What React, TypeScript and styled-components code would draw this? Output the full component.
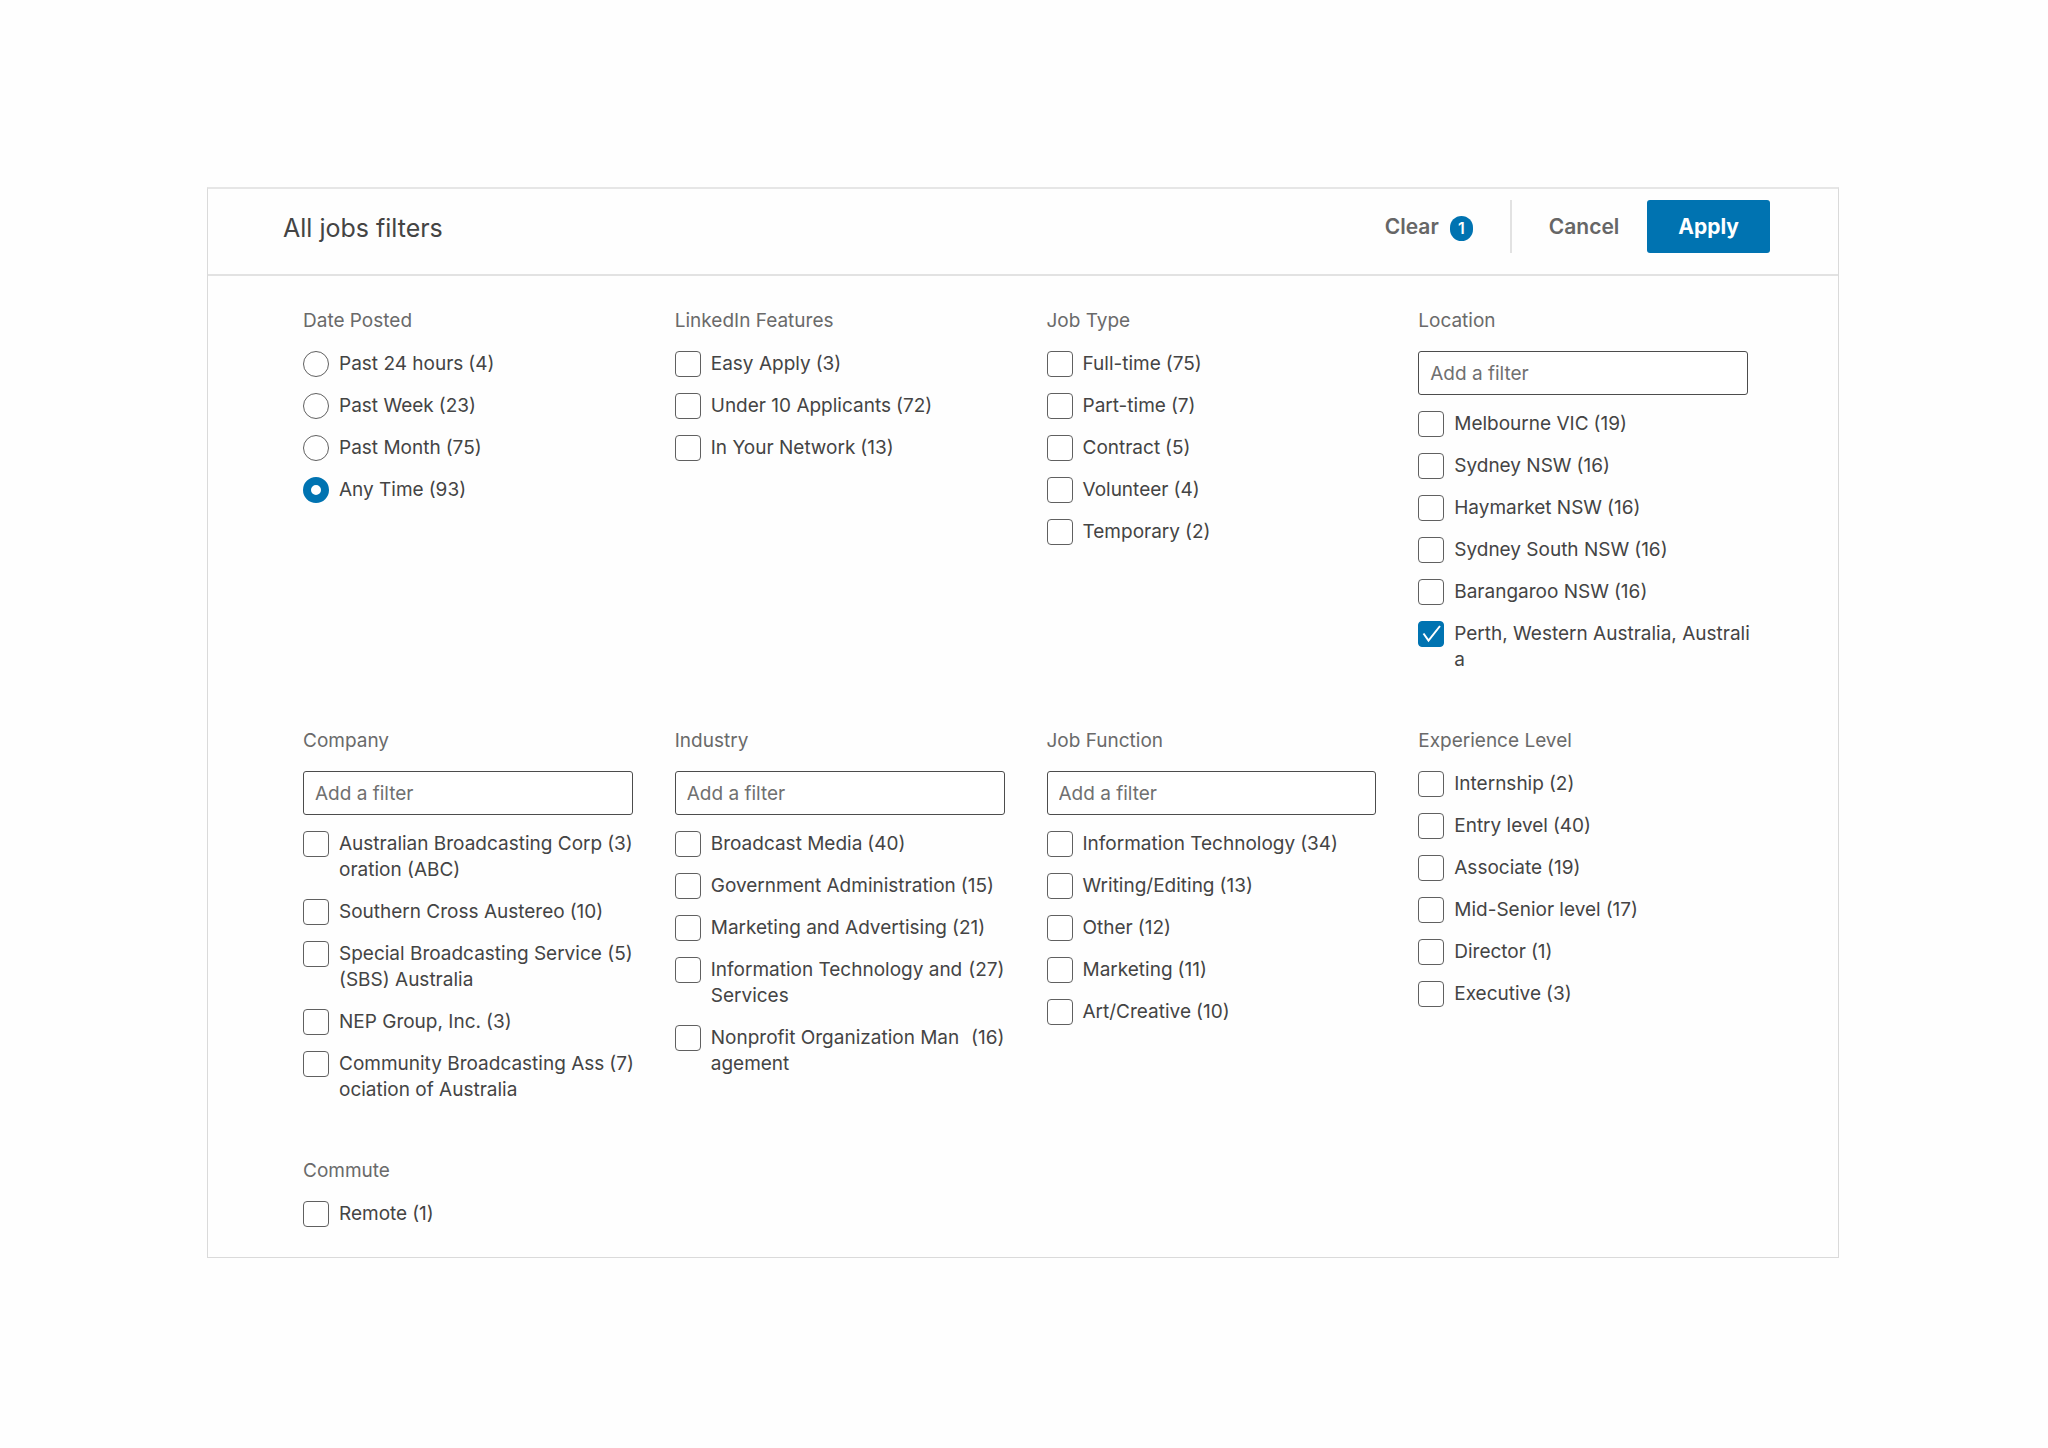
import React, { useState } from 'react';
import styled, { createGlobalStyle } from 'styled-components';

const GlobalStyle = createGlobalStyle`
  *, *::before, *::after { box-sizing: border-box; }
  body {
    margin: 0;
    background: #fefefe;
    color: #444444;
    font-family: Inter, "Liberation Sans", sans-serif;
    font-size: 19px;
    line-height: 26px;
  }
  button, input { font: inherit; color: inherit; }
`;

const Page = styled.main`
  padding: 187px 209px 187px 207px;
`;

const Panel = styled.form`
  border: 1px solid #dadada;
  border-top: 2px solid #e6e6e6;
`;

const Header = styled.header`
  display: flex;
  align-items: flex-start;
  justify-content: space-between;
  padding: 11px 68px 21px 75px;
  border-bottom: 2px solid #e2e2e2;
`;

const Title = styled.h1`
  margin: 10px 0 0;
  font-size: 25px;
  font-weight: 400;
  line-height: 36px;
`;

const Actions = styled.div`
  display: flex;
  align-items: stretch;
  height: 53px;
`;

const TextButton = styled.button`
  display: flex;
  align-items: center;
  gap: 11px;
  padding: 0 28px;
  border: 0;
  background: none;
  color: #666666;
  font-size: 21px;
  font-weight: 600;
  cursor: pointer;
`;

const ClearButton = styled(TextButton)`
  padding: 0 37px;
  border-right: 2px solid #e2e2e2;
  margin-right: 9px;
`;

const Badge = styled.span`
  min-width: 23px;
  margin-top: 4px;
  border-radius: 12px;
  background: #0073b1;
  color: #ffffff;
  font-size: 16px;
  line-height: 25px;
  text-align: center;
`;

const ApplyButton = styled(TextButton)`
  padding: 0 31px;
  border-radius: 3px;
  background: #0073b1;
  color: #ffffff;
  font-weight: 700;
`;

const Groups = styled.div`
  display: grid;
  grid-template-columns: repeat(4, minmax(0, 1fr));
  gap: 55px 42px;
  padding: 32px 90px 30px 95px;
`;

const Group = styled.fieldset`
  min-width: 0;
  margin: 0;
  padding: 0;
  border: 0;
`;

const GroupName = styled.legend`
  margin-bottom: 17px;
  padding: 0;
  color: #6a6a6a;
`;

const Stack = styled.div`
  display: flex;
  flex-direction: column;
  gap: 16px;
`;

const FilterInput = styled.input`
  width: 100%;
  height: 44px;
  padding: 0 11px;
  border: 1px solid #4c4c4c;
  border-radius: 3px;
  outline: 0;
  background: #ffffff;
  &::placeholder { color: #707070; opacity: 1; }
`;

const Option = styled.label`
  display: flex;
  align-items: flex-start;
  gap: 10px;
  cursor: pointer;
`;

const Marker = styled.span`
  display: grid;
  flex: none;
  > * { grid-area: 1 / 1; }
`;

const Control = styled.input<{ $round: boolean }>`
  appearance: none;
  width: 26px;
  height: 26px;
  margin: 0;
  border: 1px solid #606060;
  border-radius: ${(p) => (p.$round ? '50%' : '4px')};
  background: #ffffff;
  &:checked {
    border: ${(p) => (p.$round ? '8px' : '1px')} solid #0073b1;
    background: ${(p) => (p.$round ? '#ffffff' : '#0073b1')};
  }
`;

const Tick = styled.svg`
  pointer-events: none;
`;

const OptionText = styled.span<{ $split: boolean }>`
  display: flex;
  flex: 1;
  justify-content: ${(p) => (p.$split ? 'space-between' : 'flex-start')};
  gap: 5px;
  white-space: pre;
`;

type Item = { label: string; count?: number };
type GroupData = { name: string; single?: boolean; search?: boolean; items: Item[] };

const groups: GroupData[] = [
  {
    name: 'Date Posted',
    single: true,
    items: [
      { label: 'Past 24 hours', count: 4 },
      { label: 'Past Week', count: 23 },
      { label: 'Past Month', count: 75 },
      { label: 'Any Time', count: 93 },
    ],
  },
  {
    name: 'LinkedIn Features',
    items: [
      { label: 'Easy Apply', count: 3 },
      { label: 'Under 10 Applicants', count: 72 },
      { label: 'In Your Network', count: 13 },
    ],
  },
  {
    name: 'Job Type',
    items: [
      { label: 'Full-time', count: 75 },
      { label: 'Part-time', count: 7 },
      { label: 'Contract', count: 5 },
      { label: 'Volunteer', count: 4 },
      { label: 'Temporary', count: 2 },
    ],
  },
  {
    name: 'Location',
    search: true,
    items: [
      { label: 'Melbourne VIC', count: 19 },
      { label: 'Sydney NSW', count: 16 },
      { label: 'Haymarket NSW', count: 16 },
      { label: 'Sydney South NSW', count: 16 },
      { label: 'Barangaroo NSW', count: 16 },
      { label: 'Perth, Western Australia, Australi\na' },
    ],
  },
  {
    name: 'Company',
    search: true,
    items: [
      { label: 'Australian Broadcasting Corp\noration (ABC)', count: 3 },
      { label: 'Southern Cross Austereo', count: 10 },
      { label: 'Special Broadcasting Service\n(SBS) Australia', count: 5 },
      { label: 'NEP Group, Inc.', count: 3 },
      { label: 'Community Broadcasting Ass\nociation of Australia', count: 7 },
    ],
  },
  {
    name: 'Industry',
    search: true,
    items: [
      { label: 'Broadcast Media', count: 40 },
      { label: 'Government Administration', count: 15 },
      { label: 'Marketing and Advertising', count: 21 },
      { label: 'Information Technology and\nServices', count: 27 },
      { label: 'Nonprofit Organization Man\nagement', count: 16 },
    ],
  },
  {
    name: 'Job Function',
    search: true,
    items: [
      { label: 'Information Technology', count: 34 },
      { label: 'Writing/Editing', count: 13 },
      { label: 'Other', count: 12 },
      { label: 'Marketing', count: 11 },
      { label: 'Art/Creative', count: 10 },
    ],
  },
  {
    name: 'Experience Level',
    items: [
      { label: 'Internship', count: 2 },
      { label: 'Entry level', count: 40 },
      { label: 'Associate', count: 19 },
      { label: 'Mid-Senior level', count: 17 },
      { label: 'Director', count: 1 },
      { label: 'Executive', count: 3 },
    ],
  },
  { name: 'Commute', items: [{ label: 'Remote', count: 1 }] },
];

const initial: Record<string, number[]> = { 'Date Posted': [3], Location: [5] };

export default function App() {
  const [picked, setPicked] = useState(initial);

  const toggle = (group: GroupData, index: number) =>
    setPicked((prev) => {
      const current = prev[group.name] ?? [];
      if (group.single) return { ...prev, [group.name]: [index] };
      const next = current.includes(index)
        ? current.filter((i) => i !== index)
        : [...current, index];
      return { ...prev, [group.name]: next };
    });

  const active = groups
    .filter((g) => !g.single)
    .reduce((sum, g) => sum + (picked[g.name]?.length ?? 0), 0);

  return (
    <>
      <GlobalStyle />
      <Page>
        <Panel onSubmit={(e) => e.preventDefault()}>
          <Header>
            <Title>All jobs filters</Title>
            <Actions>
              <ClearButton type="button" onClick={() => setPicked({ 'Date Posted': [3] })}>
                Clear
                {active > 0 && <Badge>{active}</Badge>}
              </ClearButton>
              <TextButton type="button">Cancel</TextButton>
              <ApplyButton type="submit">Apply</ApplyButton>
            </Actions>
          </Header>
          <Groups>
            {groups.map((group) => (
              <Group key={group.name}>
                <GroupName>{group.name}</GroupName>
                <Stack>
                  {group.search && (
                    <FilterInput type="text" placeholder="Add a filter" aria-label={group.name} />
                  )}
                  {group.items.map((item, index) => {
                    const checked = (picked[group.name] ?? []).includes(index);
                    return (
                      <Option key={item.label}>
                        <Marker>
                          <Control
                            type={group.single ? 'radio' : 'checkbox'}
                            name={group.name}
                            $round={!!group.single}
                            checked={checked}
                            onChange={() => toggle(group, index)}
                          />
                          {checked && !group.single && (
                            <Tick width="26" height="26" viewBox="0 0 26 26" aria-hidden="true">
                              <path d="M5.5 12.5 L10.5 19.5 L22 5" fill="none" stroke="#ffffff" strokeWidth="2" />
                            </Tick>
                          )}
                        </Marker>
                        <OptionText $split={item.label.includes('\n')}>
                          <span>{item.label}</span>
                          {item.count !== undefined && <span>({item.count})</span>}
                        </OptionText>
                      </Option>
                    );
                  })}
                </Stack>
              </Group>
            ))}
          </Groups>
        </Panel>
      </Page>
    </>
  );
}
